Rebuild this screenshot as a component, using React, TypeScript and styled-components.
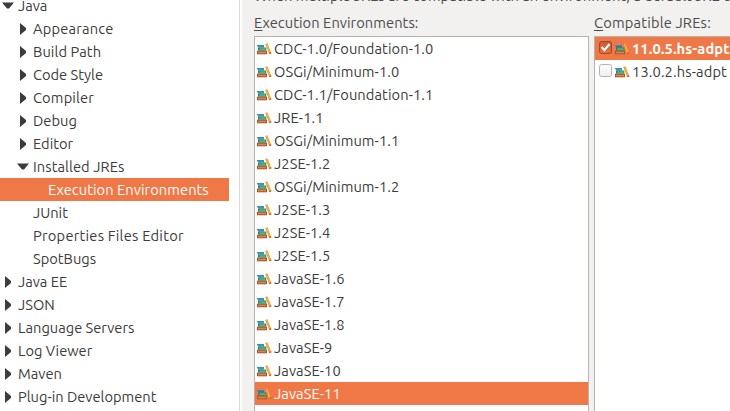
import React from "react";
import styled, { createGlobalStyle } from "styled-components";

const Global = createGlobalStyle`
  *, *::before, *::after { box-sizing: border-box; }
  body { margin: 0; overflow: hidden; background: #fff; }
`;

const Window = styled.div`
  display: grid;
  grid-template-columns: 239px 3px 1fr;
  width: 730px;
  height: 411px;
  overflow: hidden;
  background: #fff;
  color: #3c3c3c;
  font: 14.667px/23px Ubuntu, "Noto Sans", sans-serif;
  white-space: nowrap;
`;

const Tree = styled.ul`
  margin: -6px 0 0;
  padding: 0;
  width: 229px;
  list-style: none;
`;

const TreeRow = styled.li<{ $indent: number; $selected?: boolean }>`
  display: flex;
  align-items: center;
  height: 23px;
  padding-left: ${(p) => p.$indent}px;
  background: ${(p) => (p.$selected ? "#f07746" : "transparent")};
  color: ${(p) => (p.$selected ? "#fff" : "inherit")};
`;

const Text = styled.span<{ $track?: number }>`
  letter-spacing: ${(p) => p.$track ?? 0}px;
`;

const ArrowSlot = styled.span`
  display: flex;
  justify-content: center;
  width: 12px;
  margin-right: 4px;
`;

const Sash = styled.div`
  border-left: 1px solid #dcdad8;
  background: #fff;
`;

const Page = styled.main`
  display: flex;
  flex-direction: column;
  min-width: 0;
  overflow: hidden;
  background: #f2f1f0;
  padding-left: 12px;
`;

const Description = styled.p`
  margin: -16px 0 4px;
  height: 23px;
  color: #4c4c4c;
`;

const Columns = styled.div`
  display: grid;
  grid-template-columns: 335px 200px;
  column-gap: 5px;
  height: 420px;
`;

const Column = styled.section`
  display: flex;
  flex-direction: column;
`;

const Caption = styled.label<{ $track: number }>`
  height: 25px;
  line-height: 24px;
  color: #4c4c4c;
  letter-spacing: ${(p) => p.$track}px;
`;

const Mnemonic = styled.span`
  text-decoration: underline;
  text-underline-offset: 2px;
  text-decoration-thickness: 1px;
`;

const List = styled.ul`
  flex: 1;
  margin: 0;
  padding: 0;
  border: 1px solid #b6b3ae;
  background: #fff;
  list-style: none;
`;

const ListRow = styled.li<{ $selected?: boolean; $bold?: boolean }>`
  display: flex;
  align-items: center;
  height: 23px;
  padding-left: 2px;
  background: ${(p) => (p.$selected ? "#f07746" : "transparent")};
  color: ${(p) => (p.$selected ? "#fff" : "inherit")};
  font-weight: ${(p) => (p.$bold ? 700 : 400)};
`;

const Books = styled.svg`
  flex: none;
  width: 16px;
  height: 16px;
  margin: 1px 1px 0 0;
`;

const Check = styled.svg`
  flex: none;
  width: 13px;
  height: 13px;
  margin: 0 3px 2px 2px;
`;

function BooksIcon() {
  return (
    <Books viewBox="0 0 16 16" aria-hidden="true">
      <path d="M0 4h7v1.4H0z" fill="#2196cc" />
      <path d="M1 5.4h6v1.1H1z" fill="#17648d" />
      <path d="M1 6.5h8.3v3.2H1z" fill="#2a8a68" />
      <path d="M2.5 7.5h6v1.2h-6z" fill="#62c39b" />
      <path d="M0 9.7h10v3.6H0z" fill="#a9562c" />
      <path d="M1 10.7h8v1.6H1z" fill="#d98654" />
      <path d="M8.2 3L10.4 2.2 14.4 12.2 12.2 13z" fill="#e39a30" />
      <path d="M9.7 3.4l3.2 8.2" stroke="#f3c050" strokeWidth=".9" />
      <path d="M11.9 11.9l2.1-.8.5 1.3-2.2.9z" fill="#c4701f" />
    </Books>
  );
}

function Arrow({ open }: { open: boolean }) {
  return open ? (
    <svg width="12" height="7" viewBox="0 0 12 7" aria-hidden="true">
      <path d="M0 .4h12L7 6.4H5z" fill="#3c3c3c" />
    </svg>
  ) : (
    <svg width="6" height="12" viewBox="0 0 6 12" aria-hidden="true">
      <path d="M0 0L6 5v2L0 12z" fill="#3c3c3c" />
    </svg>
  );
}

function CheckBox({ checked }: { checked?: boolean }) {
  return (
    <Check viewBox="0 0 13 13" aria-hidden="true">
      <defs>
        <linearGradient id="checkOn" x2="0" y2="1">
          <stop stopColor="#c75b34" />
          <stop offset="1" stopColor="#e66f42" />
        </linearGradient>
        <linearGradient id="checkOff" x2="0" y2="1">
          <stop stopColor="#fff" />
          <stop offset="1" stopColor="#eee" />
        </linearGradient>
      </defs>
      <rect x=".5" y=".5" width="12" height="12" rx="2" fill={checked ? "url(#checkOn)" : "url(#checkOff)"} stroke={checked ? "#a04a2a" : "#b5b3b1"} />
      {checked && <path d="M2.5 6l3 3.2L10.5 3" fill="none" stroke="#fff" strokeWidth="2" />}
    </Check>
  );
}

type Node = { text: string; level: number; arrow?: "open" | "closed"; selected?: boolean; track?: number };

const tree: Node[] = [
  { text: "Java", level: 0, arrow: "open" },
  { text: "Appearance", level: 1, arrow: "closed", track: 0.2 },
  { text: "Build Path", level: 1, arrow: "closed", track: 0.08 },
  { text: "Code Style", level: 1, arrow: "closed" },
  { text: "Compiler", level: 1, arrow: "closed", track: 0.15 },
  { text: "Debug", level: 1, arrow: "closed" },
  { text: "Editor", level: 1, arrow: "closed" },
  { text: "Installed JREs", level: 1, arrow: "open", track: 0.07 },
  { text: "Execution Environments", level: 2, selected: true, track: 0.06 },
  { text: "JUnit", level: 1 },
  { text: "Properties Files Editor", level: 1, track: 0.24 },
  { text: "SpotBugs", level: 1 },
  { text: "Java EE", level: 0, arrow: "closed" },
  { text: "JSON", level: 0, arrow: "closed" },
  { text: "Language Servers", level: 0, arrow: "closed" },
  { text: "Log Viewer", level: 0, arrow: "closed" },
  { text: "Maven", level: 0, arrow: "closed" },
  { text: "Plug-in Development", level: 0, arrow: "closed" },
];

const environments = [
  "CDC-1.0/Foundation-1.0",
  "OSGi/Minimum-1.0",
  "CDC-1.1/Foundation-1.1",
  "JRE-1.1",
  "OSGi/Minimum-1.1",
  "J2SE-1.2",
  "OSGi/Minimum-1.2",
  "J2SE-1.3",
  "J2SE-1.4",
  "J2SE-1.5",
  "JavaSE-1.6",
  "JavaSE-1.7",
  "JavaSE-1.8",
  "JavaSE-9",
  "JavaSE-10",
  "JavaSE-11",
  "JavaSE-12",
];

export default function App() {
  return (
    <>
      <Global />
      <Window>
        <Tree>
          {tree.map((n) => (
            <TreeRow key={n.text} $indent={2 + n.level * 15} $selected={n.selected}>
              <ArrowSlot>{n.arrow && <Arrow open={n.arrow === "open"} />}</ArrowSlot>
              <Text $track={n.track}>{n.text}</Text>
            </TreeRow>
          ))}
        </Tree>
        <Sash />
        <Page>
          <Description>When multiple JREs are compatible with an environment, a default JRE can</Description>
          <Columns>
            <Column>
              <Caption $track={0.06}>
                <Mnemonic>E</Mnemonic>xecution Environments:
              </Caption>
              <List>
                {environments.map((text) => (
                  <ListRow key={text} $selected={text === "JavaSE-11"}>
                    <BooksIcon />
                    <Text $track={0.08}>{text}</Text>
                  </ListRow>
                ))}
              </List>
            </Column>
            <Column>
              <Caption $track={0.18}>
                <Mnemonic>C</Mnemonic>ompatible JREs:
              </Caption>
              <List>
                <ListRow $selected $bold>
                  <CheckBox checked />
                  <BooksIcon />
                  <Text $track={0.1}>11.0.5.hs-adpt</Text>
                </ListRow>
                <ListRow>
                  <CheckBox />
                  <BooksIcon />
                  <Text $track={0.12}>13.0.2.hs-adpt</Text>
                </ListRow>
              </List>
            </Column>
          </Columns>
        </Page>
      </Window>
    </>
  );
}
